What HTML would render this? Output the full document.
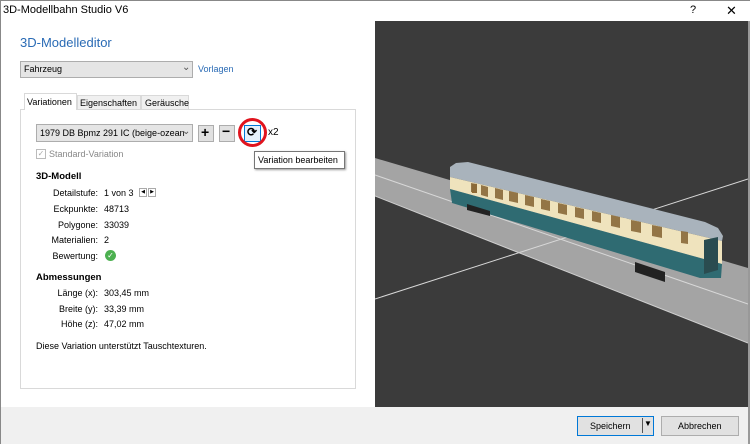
<!DOCTYPE html>
<html><head><meta charset="utf-8"><style>
*{margin:0;padding:0;box-sizing:border-box}
body{width:750px;height:444px;position:relative;background:#fff;font-family:"Liberation Sans",sans-serif;font-size:9px;color:#000;overflow:hidden}
.a{position:absolute;white-space:nowrap}
.btn{position:absolute;background:#e1e1e1;border:1px solid #adadad}
.lbl{position:absolute;width:62px;text-align:right;left:36px}
.val{position:absolute;left:104px}
</style></head><body>
<div class="a" style="left:0;top:0;width:750px;height:21px;border-top:1px solid #888;border-left:1px solid #888"></div>
<div class="a" style="left:3px;top:4px;font-size:11px">3D-Modellbahn Studio V6</div>
<div class="a" style="left:690px;top:4px;font-size:11px">?</div>
<div class="a" style="left:726px;top:3px;font-size:13px">✕</div>
<div class="a" style="left:0;top:407px;width:750px;height:37px;background:#f0f0f0"></div>
<div class="a" style="left:748px;top:21px;width:2px;height:423px;background:#999"></div>
<div class="a" style="left:0;top:21px;width:1px;height:423px;background:#888"></div>
<svg class="a" style="left:375px;top:21px" width="373" height="386" viewBox="375 21 373 386">
<rect x="375" y="21" width="373" height="386" fill="#3b3b3b"/>
<polygon points="375,158 748,268 748,343 375,196" fill="#a4a4a4"/>
<line x1="375" y1="175" x2="748" y2="304" stroke="#d8d8d8" stroke-width="1"/>
<line x1="375" y1="299" x2="748" y2="179" stroke="#d8d8d8" stroke-width="1"/>
<line x1="375" y1="196" x2="748" y2="343" stroke="#cfcfcf" stroke-width="1"/>
<polygon points="450,167 456,163 468,162 705,222 718,228 723,236 722,241 450,177" fill="#a9b3bc"/>
<polygon points="450,177 722,241 722,264 450,189" fill="#efe3bd"/>
<polygon points="450,189 722,264 721,278 700,278 452,203" fill="#2f6b72"/>
<g fill="#9a6a2c">
<rect x="472" y="184" width="5" height="9" transform="skewY(13)" style="transform:none"/>
</g>
<g fill="#8a6a3a" opacity="0.9">
<polygon points="471,183 477,184 477,193 471,192"/>
<polygon points="481,185 488,187 488,197 481,195"/>
<polygon points="495,188 503,190 503,200 495,198"/>
<polygon points="509,191 518,193 518,203 509,201"/>
<polygon points="525,195 534,197 534,207 525,205"/>
<polygon points="541,199 550,201 550,211 541,209"/>
<polygon points="558,203 567,205 567,215 558,213"/>
<polygon points="575,207 584,209 584,219 575,217"/>
<polygon points="592,211 601,213 601,223 592,221"/>
<polygon points="611,215 620,217 620,228 611,226"/>
<polygon points="631,220 641,222 641,233 631,231"/>
<polygon points="652,225 662,227 662,238 652,236"/>
<polygon points="681,231 688,232 688,244 681,243"/>
</g>
<polygon points="704,240 718,237 718,270 704,274" fill="#2a4c50"/>
<polygon points="467,204 490,211 490,216 467,210" fill="#222"/>
<polygon points="635,262 665,272 665,282 635,272" fill="#222"/>
</svg>
<div class="a" style="left:20px;top:35px;font-size:13px;color:#2a6bb5">3D-Modelleditor</div>
<div class="a" style="left:20px;top:61px;width:173px;height:17px;background:#e5e5e5;border:1px solid #adadad"></div>
<div class="a" style="left:24px;top:64px">Fahrzeug</div>
<div class="a" style="left:182px;top:62px;font-size:10px;color:#555">⌄</div>
<div class="a" style="left:198px;top:64px;color:#2a6bb5">Vorlagen</div>
<div class="a" style="left:20px;top:109px;width:336px;height:280px;border:1px solid #d9d9d9;background:#fff"></div>
<div class="a" style="left:77px;top:95px;width:64px;height:15px;background:#f0f0f0;border:1px solid #d9d9d9"></div>
<div class="a" style="left:141px;top:95px;width:48px;height:15px;background:#f0f0f0;border:1px solid #d9d9d9"></div>
<div class="a" style="left:24px;top:93px;width:53px;height:17px;background:#fff;border:1px solid #d9d9d9;border-bottom:none"></div>
<div class="a" style="left:27px;top:97px">Variationen</div>
<div class="a" style="left:80px;top:98px">Eigenschaften</div>
<div class="a" style="left:145px;top:98px">Geräusche</div>
<div class="a" style="left:36px;top:124px;width:157px;height:18px;background:#e5e5e5;border:1px solid #adadad"></div>
<div class="a" style="left:40px;top:128px">1979 DB Bpmz 291 IC (beige-ozean</div>
<div class="a" style="left:182px;top:126px;font-size:10px;color:#555">⌄</div>
<div class="btn" style="left:198px;top:125px;width:16px;height:17px"></div><div class="a" style="left:201px;top:124px;font-size:14px;font-weight:bold">+</div>
<div class="btn" style="left:219px;top:125px;width:16px;height:17px"></div><div class="a" style="left:222px;top:123px;font-size:14px;font-weight:bold">−</div>
<div class="btn" style="left:244px;top:125px;width:17px;height:17px;background:#e5f1fb;border-color:#0078d7"></div>
<div class="a" style="left:247px;top:125px;font-size:12px;font-weight:bold">⟳</div>
<div class="a" style="left:238px;top:118px;width:29px;height:29px;border:3px solid #e0141e;border-radius:50%"></div>
<div class="a" style="left:268px;top:127px;font-size:10px">x2</div>
<div class="a" style="left:36px;top:149px;width:10px;height:10px;border:1px solid #bbb;font-size:8px;color:#aaa;line-height:8px;text-align:center">✓</div>
<div class="a" style="left:49px;top:149px;color:#888">Standard-Variation</div>
<div class="a" style="left:254px;top:151px;width:91px;height:18px;background:#fff;border:1px solid #767676;box-shadow:1px 1px 2px #999"></div>
<div class="a" style="left:258px;top:155px">Variation bearbeiten</div>
<div class="a" style="left:36px;top:171px;font-weight:bold;font-size:9.5px">3D-Modell</div>
<div class="lbl" style="top:188px">Detailstufe:</div><div class="val" style="top:188px">1 von 3</div>
<div class="a" style="left:139px;top:188px;width:8px;height:9px;border:1px solid #aaa;font-size:5px;line-height:7px;text-align:center">◀</div>
<div class="a" style="left:148px;top:188px;width:8px;height:9px;border:1px solid #aaa;font-size:5px;line-height:7px;text-align:center">▶</div>
<div class="lbl" style="top:204px">Eckpunkte:</div><div class="val" style="top:204px">48713</div>
<div class="lbl" style="top:220px">Polygone:</div><div class="val" style="top:220px">33039</div>
<div class="lbl" style="top:235px">Materialien:</div><div class="val" style="top:235px">2</div>
<div class="lbl" style="top:251px">Bewertung:</div>
<div class="a" style="left:105px;top:250px;width:11px;height:11px;border-radius:50%;background:#4cb050;color:#fff;font-size:8px;line-height:11px;text-align:center">✓</div>
<div class="a" style="left:36px;top:272px;font-weight:bold;font-size:9.5px">Abmessungen</div>
<div class="lbl" style="top:288px">Länge (x):</div><div class="val" style="top:288px">303,45 mm</div>
<div class="lbl" style="top:304px">Breite (y):</div><div class="val" style="top:304px">33,39 mm</div>
<div class="lbl" style="top:319px">Höhe (z):</div><div class="val" style="top:319px">47,02 mm</div>
<div class="a" style="left:36px;top:341px">Diese Variation unterstützt Tauschtexturen.</div>
<div class="btn" style="left:577px;top:416px;width:77px;height:20px;background:#e1e1e1;border:1px solid #0078d7"></div>
<div class="a" style="left:590px;top:421px">Speichern</div>
<div class="a" style="left:642px;top:418px;width:1px;height:15px;background:#555"></div>
<div class="a" style="left:644px;top:419px;font-size:8px">▼</div>
<div class="btn" style="left:661px;top:416px;width:78px;height:20px"></div>
<div class="a" style="left:678px;top:421px">Abbrechen</div>
</body></html>
